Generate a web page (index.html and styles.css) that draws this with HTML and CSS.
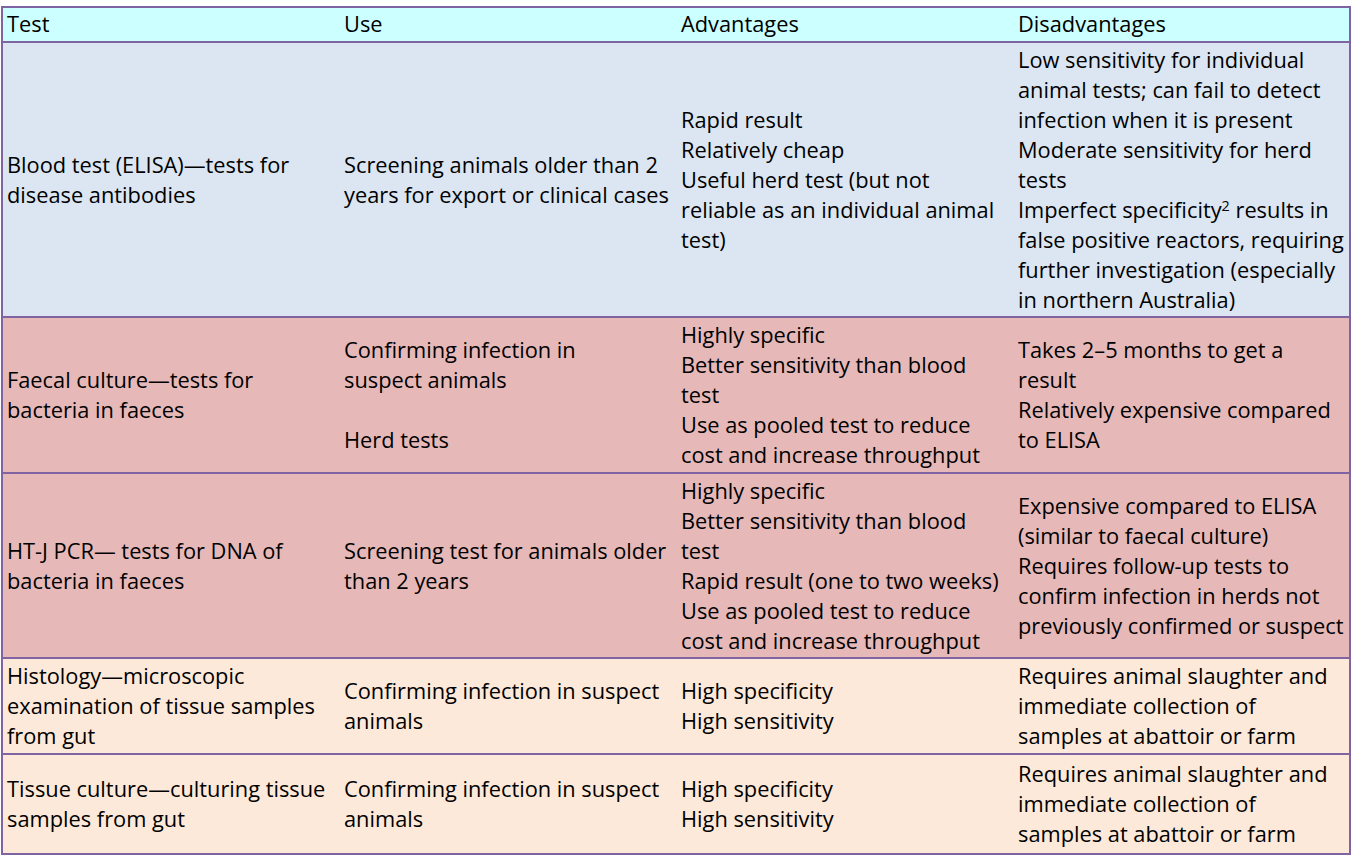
FILE: index.html
```html
<!DOCTYPE html>
<html lang="en">
<head>
<meta charset="utf-8">
<title>Tests</title>
<link rel="stylesheet" href="styles.css">
</head>
<body>
<table class="tests">
  <colgroup>
    <col class="c1"><col class="c2"><col class="c3"><col class="c4">
  </colgroup>
  <thead>
    <tr class="head">
      <th>Test</th><th>Use</th><th>Advantages</th><th>Disadvantages</th>
    </tr>
  </thead>
  <tbody>
    <tr class="blue r1">
      <td>Blood test (ELISA)—tests for<br>disease antibodies</td>
      <td>Screening animals older than 2<br>years for export or clinical cases</td>
      <td>Rapid result<br>Relatively cheap<br>Useful herd test (but not<br>reliable as an individual animal<br>test)</td>
      <td>Low sensitivity for individual<br>animal tests; can fail to detect<br>infection when it is present<br>Moderate sensitivity for herd<br>tests<br>Imperfect specificity<sup>2</sup> results in<br>false positive reactors, requiring<br>further investigation (especially<br>in northern Australia)</td>
    </tr>
    <tr class="red r2">
      <td>Faecal culture—tests for<br>bacteria in faeces</td>
      <td>Confirming infection in<br>suspect animals<br><br>Herd tests</td>
      <td>Highly specific<br>Better sensitivity than blood<br>test<br>Use as pooled test to reduce<br>cost and increase throughput</td>
      <td>Takes 2–5 months to get a<br>result<br>Relatively expensive compared<br>to ELISA</td>
    </tr>
    <tr class="red r3">
      <td>HT-J PCR— tests for DNA of<br>bacteria in faeces</td>
      <td>Screening test for animals older<br>than 2 years</td>
      <td>Highly specific<br>Better sensitivity than blood<br>test<br>Rapid result (one to two weeks)<br>Use as pooled test to reduce<br>cost and increase throughput</td>
      <td>Expensive compared to ELISA<br>(similar to faecal culture)<br>Requires follow-up tests to<br>confirm infection in herds not<br>previously confirmed or suspect</td>
    </tr>
    <tr class="peach r4">
      <td>Histology—microscopic<br>examination of tissue samples<br>from gut</td>
      <td>Confirming infection in suspect<br>animals</td>
      <td>High specificity<br>High sensitivity</td>
      <td>Requires animal slaughter and<br>immediate collection of<br>samples at abattoir or farm</td>
    </tr>
    <tr class="peach r5">
      <td>Tissue culture—culturing tissue<br>samples from gut</td>
      <td>Confirming infection in suspect<br>animals</td>
      <td>High specificity<br>High sensitivity</td>
      <td>Requires animal slaughter and<br>immediate collection of<br>samples at abattoir or farm</td>
    </tr>
  </tbody>
</table>
</body>
</html>
```
FILE: styles.css
```css
html, body {
  margin: 0;
  padding: 0;
  background: #ffffff;
}
body {
  padding: 6px 0 0 1px;
  font-family: "Open Sans", "Noto Sans", sans-serif;
  font-size: 21.8px;
  color: #000;
}
.tests {
  border-collapse: collapse;
  table-layout: fixed;
  width: 1348px;
  border: 2px solid #8064a2;
}
.c1, .c2, .c3, .c4 { width: 337px; }
.tests th, .tests td {
  text-align: left;
  vertical-align: middle;
  font-weight: normal;
  line-height: 30px;
  padding: 0 0 0 4px;
  white-space: nowrap;
  overflow: hidden;
}
.tests th + th, .tests td + td { padding-left: 5px; }
.tests tr { border-bottom: 2px solid #8064a2; }
.head { background: #ccffff; height: 35px; }
.head th { padding-bottom: 2px; }
.blue { background: #dce6f2; }
.red { background: #e6b9b8; }
.peach { background: #fde9d9; }
.r1 { height: 275px; }
.r2 { height: 156px; }
.r3 { height: 185px; }
.r4 { height: 96px; }
.r5 { height: 100px; }
sup {
  font-size: 0.66em;
  line-height: 0;
  vertical-align: 0.5em;
}
```
